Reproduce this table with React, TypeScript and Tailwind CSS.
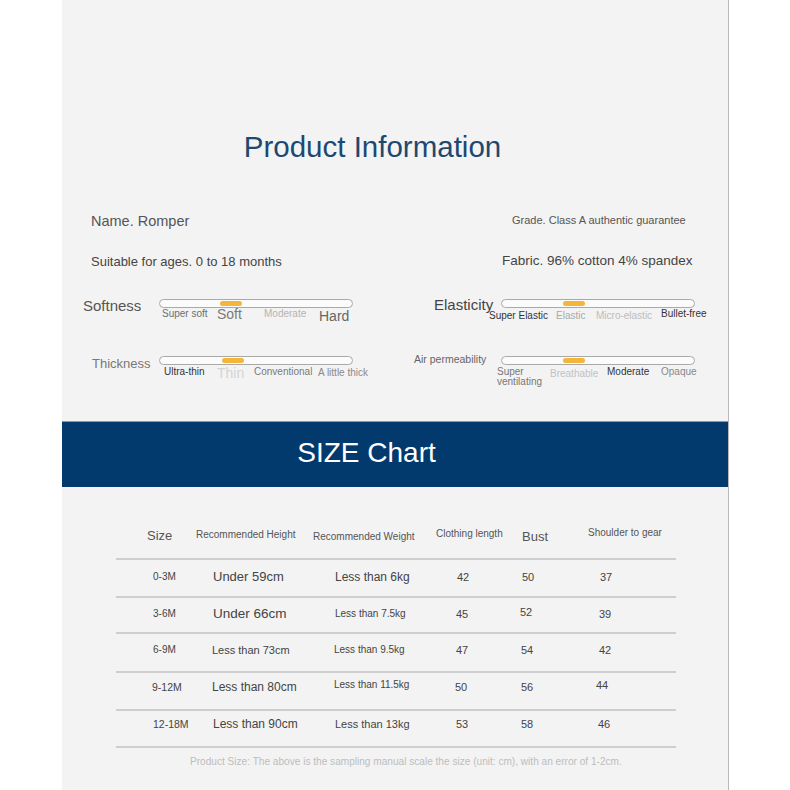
type Label = { text: string; cls: string };

interface SliderProps {
  name: string;
  nameCls: string;
  pillCls: string;
  rowCls: string;
  labels: Label[];
}

const Slider = ({ name, nameCls, pillCls, rowCls, labels }: SliderProps) => (
  <div className="flex items-start">
    <div className={nameCls}>{name}</div>
    <div className="mt-[3px] flex flex-col">
      <div className="flex h-[9px] w-[194px] items-start rounded-full border border-[#a9a9a9] bg-[#fbfbfb]">
        <div className={pillCls}></div>
      </div>
      <div className={`flex w-max items-start whitespace-nowrap ${rowCls}`}>
        {labels.map((l, i) => (
          <div key={i} className={l.cls}>
            {l.text}
          </div>
        ))}
      </div>
    </div>
  </div>
);

interface Row {
  cells: { text: string; cls: string }[];
  rowCls: string;
}

const rows: Row[] = [
  {
    rowCls: 'h-[38px] pb-[2px]',
    cells: [
      { text: '0-3M', cls: 'pl-[37px] text-[10px]' },
      { text: 'Under 59cm', cls: 'text-[13px]' },
      { text: 'Less than 6kg', cls: 'text-[12px]' },
      { text: '42', cls: 'pl-[1px] text-[11px]' },
      { text: '50', cls: 'pl-[1px] text-[11px]' },
      { text: '37', cls: 'pl-[1px] text-[11px]' },
    ],
  },
  {
    rowCls: 'h-[36px] pb-[2px]',
    cells: [
      { text: '3-6M', cls: 'pl-[37px] text-[10px]' },
      { text: 'Under 66cm', cls: 'text-[13.5px]' },
      { text: 'Less than 7.5kg', cls: 'text-[10px]' },
      { text: '45', cls: 'text-[11px]' },
      { text: '52', cls: 'ml-[-1px] mb-[4px] text-[11px]' },
      { text: '39', cls: 'text-[11px]' },
    ],
  },
  {
    rowCls: 'h-[39px] pb-[5px]',
    cells: [
      { text: '6-9M', cls: 'pl-[37px] text-[10px]' },
      { text: 'Less than 73cm', cls: 'ml-[-1px] text-[11px]' },
      { text: 'Less than 9.5kg', cls: 'ml-[-1px] text-[10px]' },
      { text: '47', cls: 'text-[11px]' },
      { text: '54', cls: 'text-[11px]' },
      { text: '42', cls: 'text-[11px]' },
    ],
  },
  {
    rowCls: 'h-[38px] pb-[8px]',
    cells: [
      { text: '9-12M', cls: 'pl-[36px] text-[10.5px]' },
      { text: 'Less than 80cm', cls: 'ml-[-1px] text-[12px]' },
      { text: 'Less than 11.5kg', cls: 'ml-[-1px] mb-[5px] text-[10px]' },
      { text: '50', cls: 'ml-[-1px] text-[11px]' },
      { text: '56', cls: 'text-[11px]' },
      { text: '44', cls: 'ml-[-3px] mb-[5px] text-[11px]' },
    ],
  },
  {
    rowCls: 'h-[37px] pb-[10px]',
    cells: [
      { text: '12-18M', cls: 'pl-[37px] text-[10.5px]' },
      { text: 'Less than 90cm', cls: 'text-[12px]' },
      { text: 'Less than 13kg', cls: 'text-[11px]' },
      { text: '53', cls: 'text-[11px]' },
      { text: '58', cls: 'text-[11px]' },
      { text: '46', cls: 'ml-[-1px] text-[11px]' },
    ],
  },
];

export default function App() {
  return (
    <div className="h-[790px] w-[790px] overflow-hidden bg-white font-['Liberation_Sans',Arial,sans-serif]">
      <div className="ml-[62px] flex h-full w-[667px] flex-col border-r border-[#b8b8b8] bg-[#f3f3f3]">
        {/* product information */}
        <div className="flex h-[421px] flex-col">
          <div className="h-[210px] pt-[130px] pr-[45px] text-center text-[29.5px] leading-[33px] text-[#1d4871]">
            Product Information
          </div>

          <div className="flex h-[42px] items-start">
            <div className="w-[338px] pl-[29px] pt-[2px] text-[14.5px] leading-[18px] text-[#555]">Name. Romper</div>
            <div className="pl-[112px] pt-[3px] text-[11px] leading-[14px] text-[#555]">
              Grade. Class A authentic guarantee
            </div>
          </div>

          <div className="flex h-[44px] items-start">
            <div className="w-[338px] pl-[29px] pt-[2px] text-[13px] leading-[16px] text-[#444]">
              Suitable for ages. 0 to 18 months
            </div>
            <div className="pl-[102px] pt-[1px] text-[13.5px] leading-[16px] text-[#444]">
              Fabric. 96% cotton 4% spandex
            </div>
          </div>

          <div className="flex h-[57px] items-start">
            <div className="w-[338px]">
              <Slider
                name="Softness"
                nameCls="w-[97px] shrink-0 pl-[21px] pt-[1px] text-[15px] leading-[18px] text-[#555]"
                pillCls="ml-[60px] mt-[1px] h-[5px] w-[22px] rounded-full bg-[#f4b53b]"
                rowCls=""
                labels={[
                  { text: 'Super soft', cls: 'w-[58px] pl-[3px] text-[10px] leading-[12px] text-[#6e6e6e]' },
                  { text: 'Soft', cls: 'mt-[-1px] w-[47px] text-[14px] leading-[14px] text-[#7a7a7a]' },
                  { text: 'Moderate', cls: 'w-[55px] text-[10px] leading-[12px] text-[#b3b3b3]' },
                  { text: 'Hard', cls: 'mt-[1px] text-[14px] leading-[14px] text-[#666]' },
                ]}
              />
            </div>
            <div>
              <Slider
                name="Elasticity"
                nameCls="w-[101px] shrink-0 pl-[34px] text-[15px] leading-[18px] text-[#444]"
                pillCls="ml-[61px] mt-[1px] h-[5px] w-[22px] rounded-full bg-[#f4b53b]"
                rowCls="ml-[-12px]"
                labels={[
                  { text: 'Super Elastic', cls: 'mt-[2px] w-[67px] text-[10px] leading-[12px] text-[#333]' },
                  { text: 'Elastic', cls: 'mt-[2px] w-[40px] text-[10px] leading-[12px] text-[#aaa]' },
                  { text: 'Micro-elastic', cls: 'mt-[2px] w-[65px] text-[10px] leading-[12px] text-[#bdbdbd]' },
                  { text: 'Bullet-free', cls: 'text-[10px] leading-[12px] text-[#333]' },
                ]}
              />
            </div>
          </div>

          <div className="flex flex-1 items-start">
            <div className="w-[338px]">
              <Slider
                name="Thickness"
                nameCls="w-[97px] shrink-0 pl-[30px] pt-[3px] text-[13px] leading-[16px] text-[#777]"
                pillCls="ml-[62px] mt-[1px] h-[5px] w-[22px] rounded-full bg-[#f4b53b]"
                rowCls=""
                labels={[
                  { text: 'Ultra-thin', cls: 'mt-[1px] w-[58px] pl-[5px] text-[10px] leading-[12px] text-[#333]' },
                  { text: 'Thin', cls: 'mt-[1px] w-[37px] text-[14px] leading-[14px] text-[#d3d3d3]' },
                  { text: 'Conventional', cls: 'mt-[1px] w-[64px] text-[10px] leading-[12px] text-[#7a7a7a]' },
                  { text: 'A little thick', cls: 'mt-[2px] text-[10px] leading-[12px] text-[#8a8a8a]' },
                ]}
              />
            </div>
            <div>
              <Slider
                name="Air permeability"
                nameCls="w-[101px] shrink-0 pl-[14px] text-[10.5px] leading-[13px] text-[#666]"
                pillCls="ml-[61px] mt-[1px] h-[5px] w-[22px] rounded-full bg-[#f4b53b]"
                rowCls="ml-[-4px]"
                labels={[
                  { text: 'Super ventilating', cls: 'mt-[2px] w-[53px] whitespace-normal pr-[8px] text-[10px] leading-[10px] text-[#777]' },
                  { text: 'Breathable', cls: 'mt-[3px] w-[57px] text-[10px] leading-[12px] text-[#c2c2c2]' },
                  { text: 'Moderate', cls: 'mt-[1px] w-[54px] text-[10px] leading-[12px] text-[#333]' },
                  { text: 'Opaque', cls: 'mt-[1px] text-[10px] leading-[12px] text-[#888]' },
                ]}
              />
            </div>
          </div>
        </div>

        {/* size chart band */}
        <div className="flex h-[66px] items-center justify-center border-t border-[#7f9bba] bg-[#023a6d] pr-[57px] pb-[4px] text-[28px] leading-[32px] text-white">
          SIZE Chart
        </div>

        {/* table */}
        <div className="ml-[54px] w-[560px] pt-[38px] text-[#444]">
          <div className="grid h-[35px] grid-cols-[80px_117px_123px_86px_66px_1fr] items-start border-b-2 border-[#cecece] text-[#555]">
            <div className="pl-[31px] pt-[3px] text-[13px] leading-[16px]">Size</div>
            <div className="pt-[4px] text-[10px] leading-[12px]">Recommended Height</div>
            <div className="pt-[6px] text-[10px] leading-[12px]">Recommended Weight</div>
            <div className="pt-[3px] text-[10px] leading-[12px]">Clothing length</div>
            <div className="pt-[4px] text-[13px] leading-[16px]">Bust</div>
            <div className="pt-[2px] text-[10px] leading-[12px]">Shoulder to gear</div>
          </div>

          {rows.map((row, i) => (
            <div
              key={i}
              className={`grid grid-cols-[97px_122px_121px_65px_78px_1fr] items-center border-b-2 border-[#cecece] ${row.rowCls}`}
            >
              {row.cells.map((c, j) => (
                <div key={j} className={`whitespace-nowrap leading-[14px] ${c.cls}`}>
                  {c.text}
                </div>
              ))}
            </div>
          ))}

          <div className="mt-[8px] whitespace-nowrap pl-[74px] text-[10.1px] leading-[12px] text-[#bdbdbd]">
            Product Size: The above is the sampling manual scale the size (unit: cm), with an error of 1-2cm.
          </div>
        </div>
      </div>
    </div>
  );
}
